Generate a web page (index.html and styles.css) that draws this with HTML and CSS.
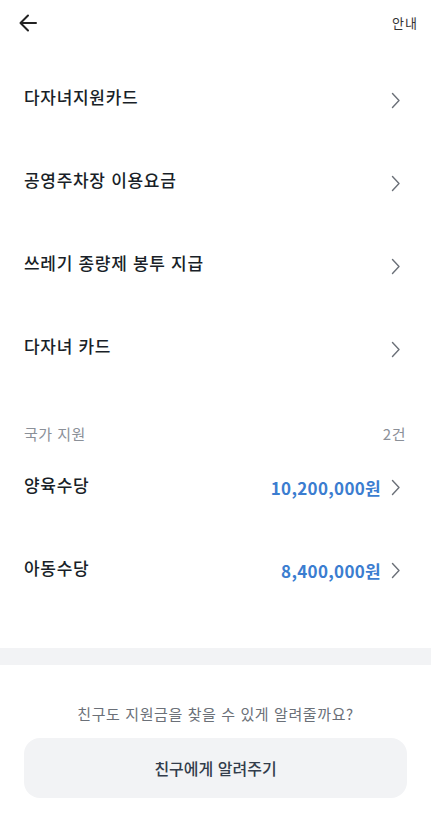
FILE: index.html
```html
<!DOCTYPE html>
<html lang="ko">
<head>
<meta charset="utf-8">
<link rel="stylesheet" href="styles.css">
</head>
<body>
<div class="page">
  <header class="topbar">
    <svg class="back" width="20" height="20" viewBox="0 0 20 20"><path d="M18 10H3M10 2.5L2.5 10L10 17.5" fill="none" stroke="#222" stroke-width="2" stroke-linecap="round" stroke-linejoin="round"/></svg>
    <span class="guide">안내</span>
  </header>

  <ul class="list first">
    <li class="row"><span class="label">다자녀지원카드</span><svg class="chev" width="10" height="17" viewBox="0 0 10 17"><path d="M1.5 1.5L8 8.5L1.5 15.5" fill="none" stroke="#6b7078" stroke-width="1.4" stroke-linecap="round" stroke-linejoin="round"/></svg></li>
    <li class="row"><span class="label">공영주차장 이용요금</span><svg class="chev" width="10" height="17" viewBox="0 0 10 17"><path d="M1.5 1.5L8 8.5L1.5 15.5" fill="none" stroke="#6b7078" stroke-width="1.4" stroke-linecap="round" stroke-linejoin="round"/></svg></li>
    <li class="row"><span class="label">쓰레기 종량제 봉투 지급</span><svg class="chev" width="10" height="17" viewBox="0 0 10 17"><path d="M1.5 1.5L8 8.5L1.5 15.5" fill="none" stroke="#6b7078" stroke-width="1.4" stroke-linecap="round" stroke-linejoin="round"/></svg></li>
    <li class="row"><span class="label">다자녀 카드</span><svg class="chev" width="10" height="17" viewBox="0 0 10 17"><path d="M1.5 1.5L8 8.5L1.5 15.5" fill="none" stroke="#6b7078" stroke-width="1.4" stroke-linecap="round" stroke-linejoin="round"/></svg></li>
  </ul>

  <div class="section-head"><span>국가 지원</span><span>2건</span></div>

  <ul class="list">
    <li class="row money"><span class="label">양육수당</span><span class="right"><span class="amount">10,200,000원</span><svg class="chev" width="10" height="17" viewBox="0 0 10 17"><path d="M1.5 1.5L8 8.5L1.5 15.5" fill="none" stroke="#6b7078" stroke-width="1.4" stroke-linecap="round" stroke-linejoin="round"/></svg></span></li>
    <li class="row money"><span class="label">아동수당</span><span class="right"><span class="amount">8,400,000원</span><svg class="chev" width="10" height="17" viewBox="0 0 10 17"><path d="M1.5 1.5L8 8.5L1.5 15.5" fill="none" stroke="#6b7078" stroke-width="1.4" stroke-linecap="round" stroke-linejoin="round"/></svg></span></li>
  </ul>

  <div class="band"></div>

  <footer class="share">
    <p class="share-text">친구도 지원금을 찾을 수 있게 알려줄까요?</p>
    <button class="share-btn">친구에게 알려주기</button>
  </footer>
</div>
</body>
</html>
```

FILE: styles.css
```css
* { box-sizing: border-box; }
html, body { margin: 0; padding: 0; background: #fff; }
body {
  font-family: "Noto Sans CJK KR", "Noto Sans", sans-serif;
  color: #191f28;
  width: 431px;
}
.page { display: flex; flex-direction: column; }
.topbar {
  height: 45px;
  display: flex;
  align-items: center;
  justify-content: space-between;
  padding: 0 13px 0 18px;
}
.back { display: block; }
.guide { font-size: 13px; letter-spacing: 1px; color: #333; }
.list { list-style: none; margin: 0; padding: 0; }
.list.first { padding-top: 12px; }
.row {
  height: 83px;
  display: flex;
  align-items: center;
  justify-content: space-between;
  padding: 0 30px 0 24px;
}
.label {
  font-size: 17px;
  font-weight: 500;
  letter-spacing: 0.7px;
  color: #191f28;
  margin-top: -4px;
}
.chev { display: block; margin-top: 4px; }
.right { display: flex; align-items: center; gap: 10px; margin-top: 4px; }
.right .chev { margin-top: 0; }
.amount { font-size: 17px; font-weight: 600; letter-spacing: 0.3px; color: #3b7dd0; }
.money .label { margin-top: -2px; }
.section-head {
  display: flex;
  justify-content: space-between;
  padding: 35px 25px 0 24px;
  line-height: 20px;
  font-size: 15px;
  letter-spacing: 0.5px;
  color: #8b9098;
}
.band { height: 17px; background: #f2f3f5; margin-top: 38px; }
.share { display: flex; flex-direction: column; align-items: center; padding: 38px 24px 28px; }
.share-text { margin: 0; font-size: 15px; letter-spacing: 0.6px; color: #6b7078; line-height: 22px; }
.share-btn {
  margin-top: 13px;
  width: 383px;
  height: 60px;
  border: none;
  border-radius: 16px;
  background: #f2f3f5;
  font-family: inherit;
  font-size: 16px;
  font-weight: 500;
  letter-spacing: 0;
  color: #333d4b;
}
```
